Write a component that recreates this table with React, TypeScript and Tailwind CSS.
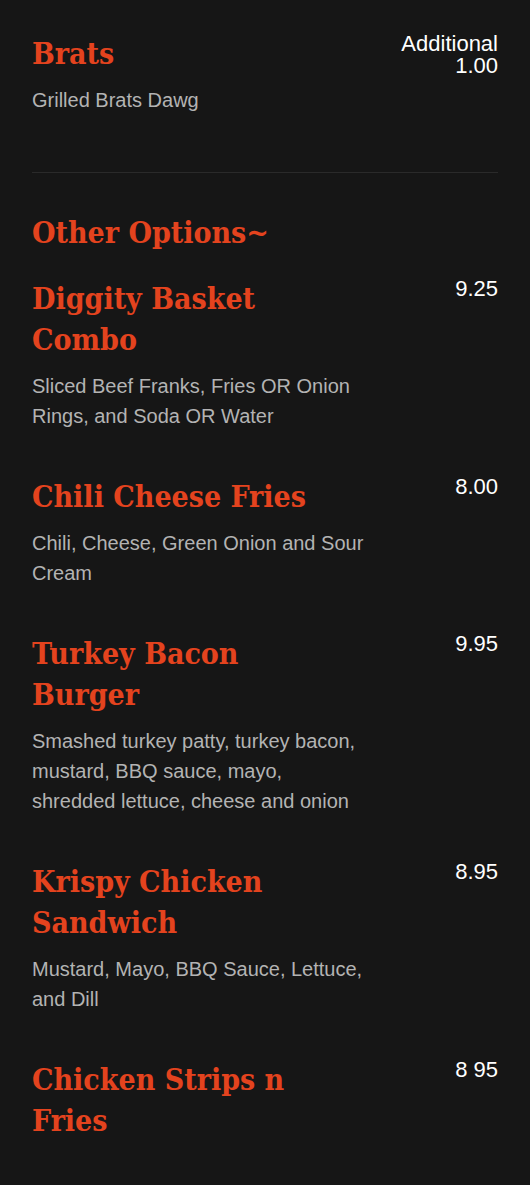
import React from 'react';

type Item = {
  name: string;
  desc?: string;
  price: string;
};

const items: Item[] = [
  {
    name: 'Diggity Basket Combo',
    desc: 'Sliced Beef Franks, Fries OR Onion Rings, and Soda OR Water',
    price: '9.25',
  },
  {
    name: 'Chili Cheese Fries',
    desc: 'Chili, Cheese, Green Onion and Sour Cream',
    price: '8.00',
  },
  {
    name: 'Turkey Bacon Burger',
    desc: 'Smashed turkey patty, turkey bacon, mustard, BBQ sauce, mayo, shredded lettuce, cheese and onion',
    price: '9.95',
  },
  {
    name: 'Krispy Chicken Sandwich',
    desc: 'Mustard, Mayo, BBQ Sauce, Lettuce, and Dill',
    price: '8.95',
  },
  {
    name: 'Chicken Strips n Fries',
    price: '8 95',
  },
];

const headingFont = "font-['DejaVu_Serif_Condensed','DejaVu_Serif',serif]";

function MenuItem({ item }: { item: Item }) {
  return (
    <div className="flex justify-between">
      <div className="w-[334px]">
        <h3 className={`${headingFont} max-w-[300px] text-[30px] font-bold leading-[41px] text-[#e4431e]`}>
          {item.name}
        </h3>
        {item.desc && (
          <p className="mt-[11px] text-[20px] leading-[30px] text-[#b3b3b3]">{item.desc}</p>
        )}
      </div>
      <div className="w-[110px] text-right text-[22px] leading-[22px] text-white">{item.price}</div>
    </div>
  );
}

export default function App() {
  return (
    <div className="min-h-screen bg-[#161616] px-8 pb-12 pt-[33px] font-['Liberation_Sans',Arial,sans-serif]">
      {/* Brats section */}
      <MenuItem item={{ name: 'Brats', desc: 'Grilled Brats Dawg', price: 'Additional 1.00' }} />

      <div className="mt-[57px] h-px bg-[#2a2a2a]" />

      <h2 className={`${headingFont} mt-[39px] text-[30px] font-bold leading-[41px] text-[#e4431e]`}>
        Other Options~
      </h2>

      <div className="mt-[25px] flex flex-col gap-[45px]">
        {items.map((it) => (
          <MenuItem key={it.name} item={it} />
        ))}
      </div>
    </div>
  );
}
